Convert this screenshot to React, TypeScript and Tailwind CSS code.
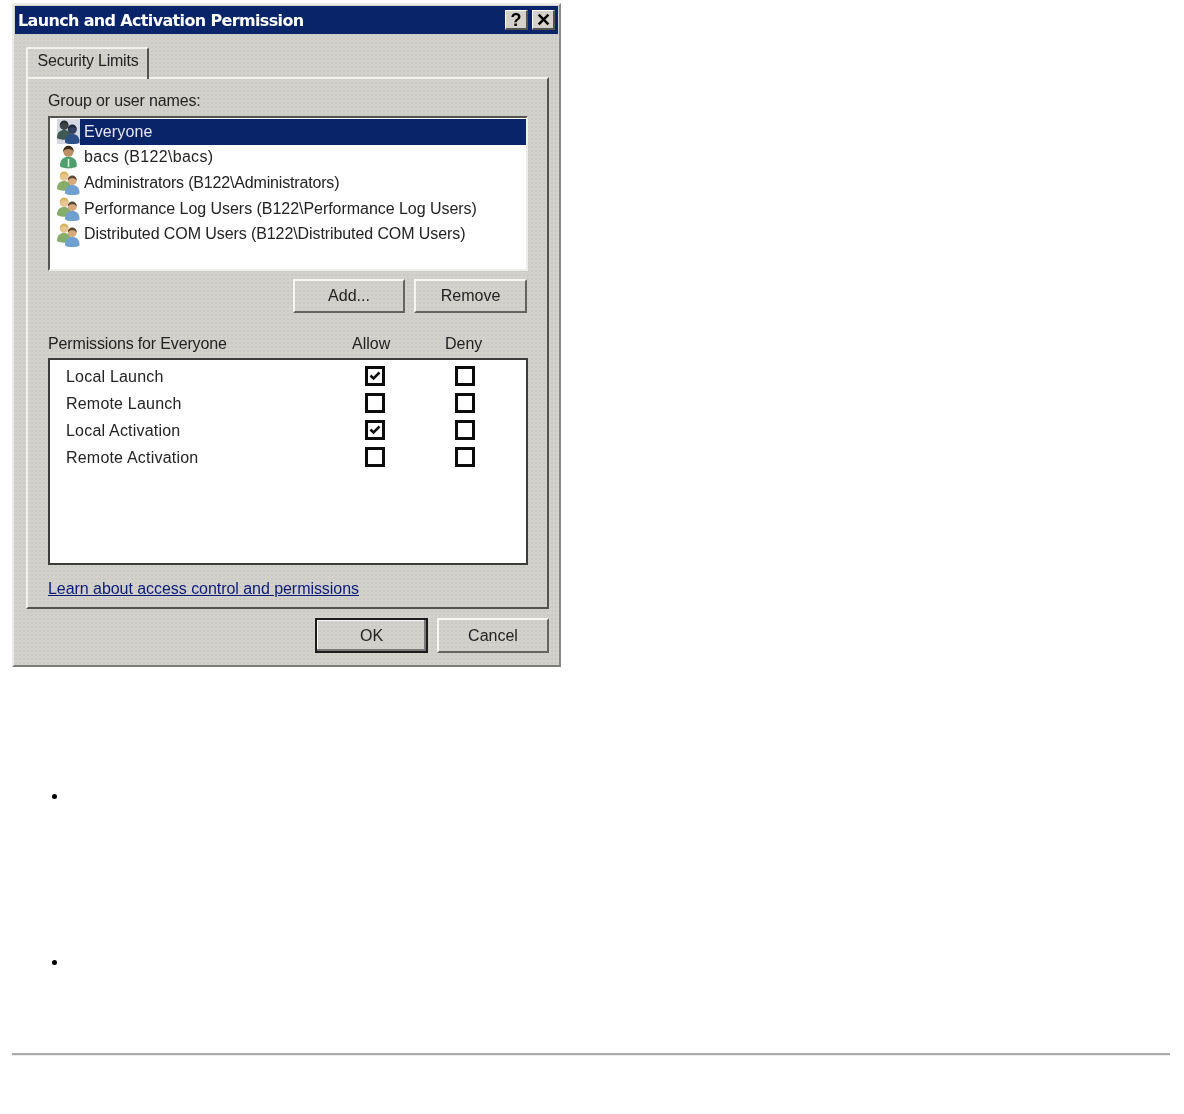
const names = [
  { label: "Everyone", icon: "everyone", track: "tracking-[0.1px]" },
  { label: "bacs (B122\\bacs)", icon: "user", track: "tracking-[0.3px]" },
  { label: "Administrators (B122\\Administrators)", icon: "group", track: "tracking-[-0.17px]" },
  { label: "Performance Log Users (B122\\Performance Log Users)", icon: "group", track: "tracking-[-0.04px]" },
  { label: "Distributed COM Users (B122\\Distributed COM Users)", icon: "group", track: "tracking-[-0.09px]" },
];

const permissions = [
  { label: "Local Launch", allow: true },
  { label: "Remote Launch", allow: false },
  { label: "Local Activation", allow: true },
  { label: "Remote Activation", allow: false },
];

function Person({ x, y, s, hair, body, skin }: { x: number; y: number; s: number; hair: string; body: string; skin: string }) {
  return (
    <g transform={`translate(${x} ${y}) scale(${s})`}>
      <path d="M0 16c0-5 3-7 6.500-7s6.500 2 6.500 7c0 1-3 2-6.500 2S0 17 0 16z" fill={body} />
      <circle cx="6.500" cy="5" r="4" fill={skin} />
      <path d="M2.500 5c0-3 2-4.500 4-4.500s4 1.500 4 4.500c-1-1.500-2.500-2-4-2s-3 .5-4 2z" fill={hair} />
    </g>
  );
}

function UserIcon({ type }: { type: string }) {
  if (type === "everyone") {
    return (
      <svg width="23" height="25" viewBox="0 0 23 25" className="bg-[#d5d8e0]">
        <Person x={0} y={1} s={1.1} hair="#2a2f33" body="#3f5a55" skin="#3d4448" />
        <Person x={8} y={5} s={1.12} hair="#1c2440" body="#2d4f86" skin="#33405f" />
      </svg>
    );
  }
  if (type === "user") {
    return (
      <svg width="23" height="25" viewBox="0 0 23 25">
        <Person x={3} y={0} s={1.3} hair="#3d2c1c" body="#4f9f6d" skin="#b98f63" />
        <path d="M11.500 14v8" stroke="#d8efe0" strokeWidth="1.500" />
      </svg>
    );
  }
  return (
    <svg width="23" height="25" viewBox="0 0 23 25">
      <Person x={0} y={1} s={1.1} hair="#d9b35c" body="#86ae6a" skin="#e8c48f" />
      <Person x={8} y={5} s={1.12} hair="#5b4a36" body="#6fa0cf" skin="#d6a87a" />
    </svg>
  );
}

function Checkbox({ checked }: { checked: boolean }) {
  return (
    <div className="flex h-5 w-5 items-center justify-center border-[3px] border-[#0c0c0c] bg-white">
      {checked && (
        <svg width="14" height="14" viewBox="0 0 14 14">
          <path d="M2.500 6.500l3 3 6-6" fill="none" stroke="#111" strokeWidth="2.500" />
        </svg>
      )}
    </div>
  );
}

function Button({ label, size, primary }: { label: string; size: string; primary?: boolean }) {
  return (
    <button
      className={`flex items-center justify-center text-[#222] ${size} ${
        primary
          ? "border-2 border-[#1c1c1c] shadow-[inset_-2px_-2px_0_#777,inset_1px_1px_0_#f4f4f0]"
          : "border-2 border-t-[#f6f6f2] border-l-[#f6f6f2] border-r-[#63635f] border-b-[#63635f]"
      }`}
    >
      {label}
    </button>
  );
}

function TitleButton({ children }: { children: string }) {
  return (
    <div className="flex h-[20px] w-[23px] items-center justify-center border-t border-l border-t-white border-l-white border-r-2 border-b-2 border-r-[#55534f] border-b-[#55534f] bg-[#d4d1cb] text-[18px] font-bold leading-none text-black">
      {children}
    </div>
  );
}

export default function App() {
  return (
    <div className="min-h-[1114px] bg-white px-3 pt-[3px] font-['Liberation_Sans',Arial,sans-serif] text-[16px] text-[#222]">
      <div className="flex h-[664px] w-[549px] flex-col border-2 border-t-[#ecebe7] border-l-[#ecebe7] border-r-[#8a8883] border-b-[#7d7b77] bg-[#d3d1cb] bg-[radial-gradient(#c3c0ba_0.6px,transparent_0.8px)] bg-[length:4px_4px] p-px blur-[0.4px]">
        <div className="flex h-[28px] items-center justify-between bg-[#0a246a] pl-[3px] pr-[3px]">
          <span className="pt-[2px] font-['DejaVu_Sans',sans-serif] text-[16px] font-bold tracking-[-0.65px] text-white">
            Launch and Activation Permission
          </span>
          <div className="flex gap-[4px]">
            <TitleButton>?</TitleButton>
            <TitleButton>✕</TitleButton>
          </div>
        </div>

        <div className="ml-[11px] mt-[13px] flex h-[30px]">
          <div className="relative z-10 flex h-[32px] w-[123px] items-center justify-center rounded-t-[2px] border-t-2 border-l-2 border-r-2 border-t-[#f2f2ee] border-l-[#f2f2ee] border-r-[#55534f] pb-[6px] pl-px tracking-[-0.2px]">
            Security Limits
          </div>
        </div>

        <div className="ml-[11px] flex h-[532px] w-[523px] flex-col border-2 border-t-[#f2f2ee] border-l-[#f2f2ee] border-r-[#55534f] border-b-[#55534f] px-[20px]">
          <div className="mt-[13px] h-[24px] leading-[18px] tracking-[-0.15px]">Group or user names:</div>
          <div className="h-[155px] w-[480px] border-2 border-t-[#55534f] border-l-[#55534f] border-r-[#eeeeea] border-b-[#eeeeea] bg-white pt-px">
            {names.map((n, i) => (
              <div key={n.label} className="flex h-[25.6px] items-center pl-[7px]">
                <UserIcon type={n.icon} />
                <span
                  className={`flex h-full flex-1 items-center pl-[4px] ${n.track} ${
                    i === 0 ? "bg-[#0a246a] text-[#e8e8ee]" : "text-[#222]"
                  }`}
                >
                  {n.label}
                </span>
              </div>
            ))}
          </div>

          <div className="mt-[8px] flex justify-end gap-[9px]">
            <Button label="Add..." size="h-[34px] w-[112px]" />
            <Button label="Remove" size="h-[34px] w-[113px]" />
          </div>

          <div className="mt-[20px] flex h-[25px] w-[480px] items-center pb-[4px]">
            <span className="w-[304px] tracking-[-0.15px]">Permissions for Everyone</span>
            <span className="w-[93px]">Allow</span>
            <span>Deny</span>
          </div>

          <div className="h-[207px] w-[480px] border-2 border-[#3c3c3a] bg-white pt-[2px]">
            {permissions.map((p) => (
              <div key={p.label} className="flex h-[27px] items-center pl-[16px]">
                <span className="w-[299px] pt-[2px] tracking-[0.2px]">{p.label}</span>
                <Checkbox checked={p.allow} />
                <span className="w-[70px]" />
                <Checkbox checked={false} />
              </div>
            ))}
          </div>

          <a className="mt-[15px] w-fit leading-[18px] tracking-[-0.05px] text-[#0a1a78] underline">
            Learn about access control and permissions
          </a>
        </div>

        <div className="mt-[9px] flex justify-end gap-[9px] pr-[9px]">
          <Button label="OK" size="h-[35px] w-[113px]" primary />
          <Button label="Cancel" size="h-[35px] w-[112px]" />
        </div>
      </div>

      <ul className="mt-[117px] list-disc pl-[56px] text-black">
        <li className="h-[166px]">{"\u00a0"}</li>
        <li className="h-[103px]">{"\u00a0"}</li>
      </ul>

      <hr className="w-[1158px] border-t-2 border-[#aaa] border-b border-b-[#eee]" />
    </div>
  );
}
